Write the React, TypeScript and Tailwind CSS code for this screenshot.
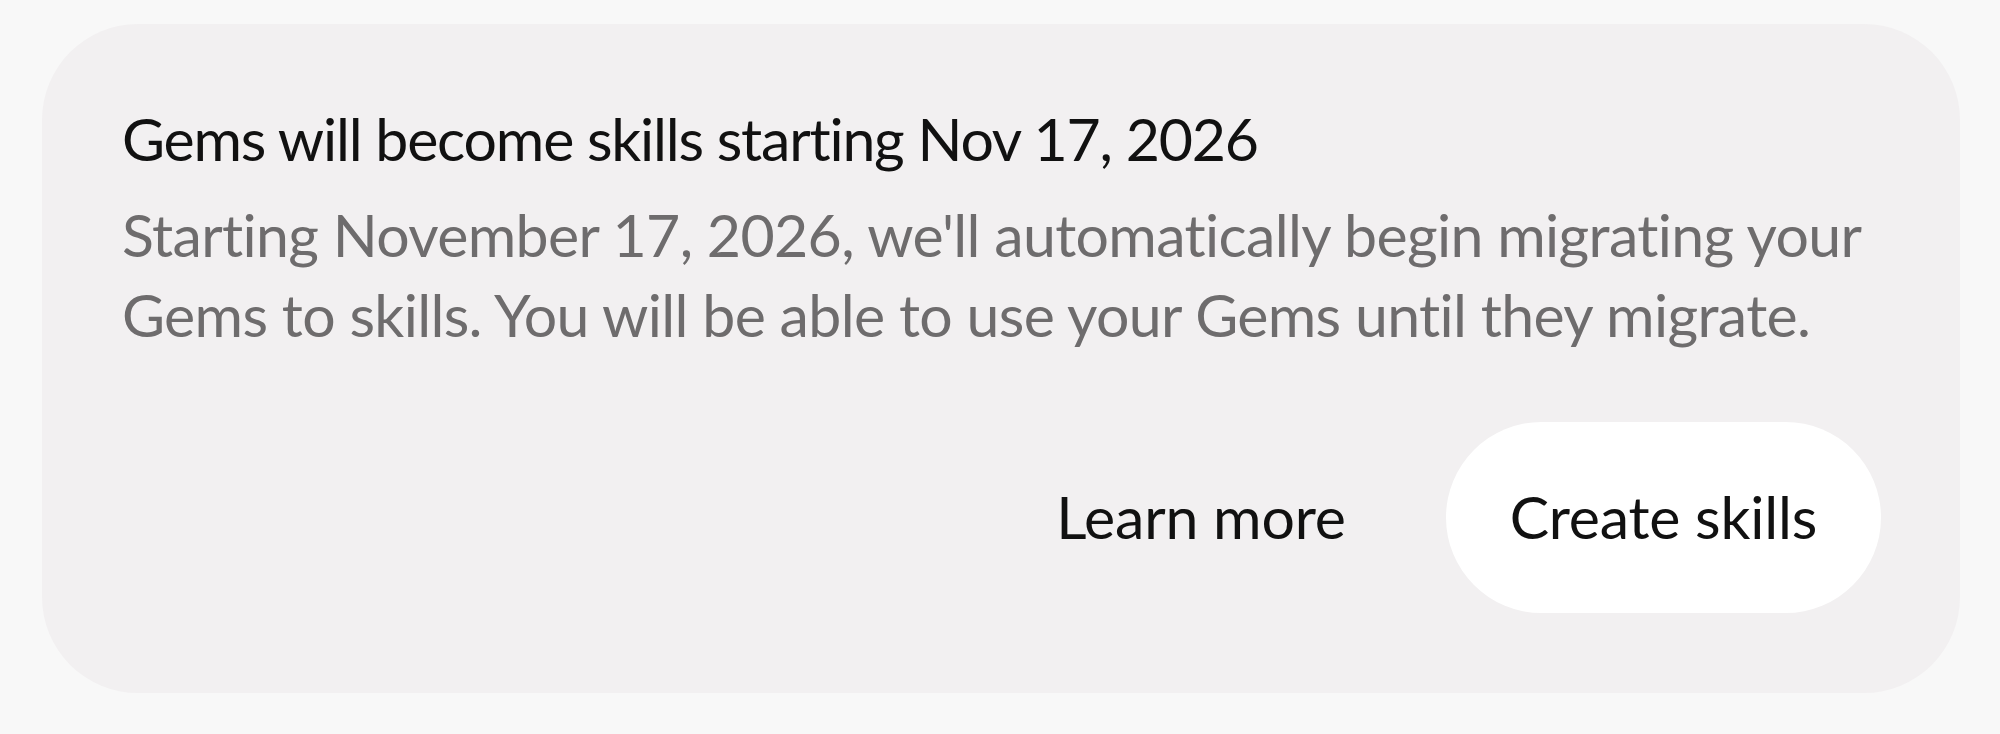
import React from "react";

export default function App() {
  return (
    <div className="min-h-screen w-full bg-[#f8f8f8] pt-[24px] pl-[42px] pr-[40px] pb-[41px] [font-variant-ligatures:none]" style={{ fontFamily: "Lato, 'Noto Sans', sans-serif" }}>
      <div className="rounded-[96px] bg-[#f2f0f1] pl-[80px] pr-[79px] pt-[79px] pb-[80px]">
        <h1 className="whitespace-nowrap text-[59px] leading-[72px] font-normal tracking-[-1.2px] text-[#111111]">
          Gems will become skills starting Nov 17, 2026
        </h1>
        <p className="mt-[20px] whitespace-nowrap text-[59px] leading-[80px] tracking-[-0.65px] text-[#6e6c6d]">
          Starting November 17, 2026, we'll automatically begin migrating your
          <br />
          Gems to skills. You will be able to use your Gems until they migrate.
        </p>
        <div className="mt-[67px] flex items-center justify-end gap-[36px]">
          <button className="h-[191px] whitespace-nowrap rounded-full px-[64px] text-[59px] tracking-[-0.2px] text-[#111111]">
            Learn more
          </button>
          <button className="h-[191px] whitespace-nowrap rounded-full bg-white px-[64px] text-[59px] tracking-[-0.2px] text-[#111111]">
            Create skills
          </button>
        </div>
      </div>
    </div>
  );
}
